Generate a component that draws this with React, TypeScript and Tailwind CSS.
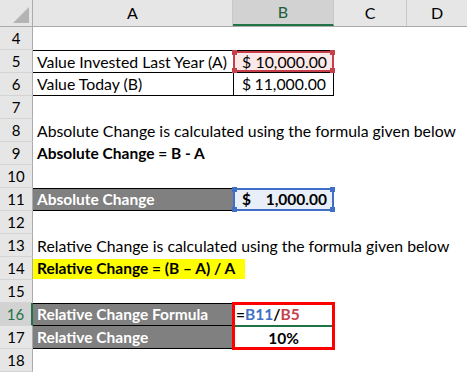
import type { ReactNode } from 'react';

const font = "font-['Lato','Liberation_Sans',sans-serif]";

function RowHead({ n, active }: { n: number; active?: boolean }) {
    return (
        <div
            className={`w-[33px] shrink-0 flex items-center justify-center text-[15px] border-b border-[#d4d4d4] ${
                active
                    ? 'bg-[#d2d2d2] text-[#217346] border-r-2 border-r-[#217346]'
                    : 'bg-[#e6e6e6] text-black border-r border-r-[#ababab]'
            }`}
        >
            {n}
        </div>
    );
}

function Row({ n, active, children }: { n: number; active?: boolean; children?: ReactNode }) {
    return (
        <div className="flex h-[23px]">
            <RowHead n={n} active={active} />
            <div className="flex flex-1 min-w-0">{children}</div>
        </div>
    );
}

function Corner({ pos, color }: { pos: string; color: string }) {
    return <span className={`absolute w-[5px] h-[5px] ${pos} ${color}`} />;
}

// reference highlight boxes drawn by Excel while editing a formula
function RefBox({ color, fill }: { color: 'red' | 'blue'; fill: string }) {
    const border = color === 'red' ? 'border-[#c6404c]' : 'border-[#3f6fc6]';
    const sq = color === 'red' ? 'bg-[#c6404c]' : 'bg-[#3f6fc6]';
    return (
        <div className={`absolute inset-0 border-2 ${border} ${fill}`}>
            <Corner pos="-left-[3px] -top-[3px]" color={sq} />
            <Corner pos="-right-[3px] -top-[3px]" color={sq} />
            <Corner pos="-left-[3px] -bottom-[3px]" color={sq} />
            <Corner pos="-right-[3px] -bottom-[3px]" color={sq} />
        </div>
    );
}

export default function App() {
    return (
        <div className={`w-[467px] h-[374px] overflow-hidden bg-white text-black ${font}`}>
            {/* Column headers */}
            <div className="flex h-[27px] bg-[#e6e6e6] border-b border-[#ababab]">
                <div className="w-[33px] shrink-0 relative border-r border-[#ababab]">
                    <svg className="absolute right-[3px] bottom-[3px]" width="16" height="16" viewBox="0 0 16 16">
                        <polygon points="16,0 16,16 0,16" fill="#b4b4b4" />
                    </svg>
                </div>
                <div className="w-[200px] shrink-0 flex items-center justify-center text-[16px] border-r border-[#c8c8c8]">A</div>
                <div className="w-[101px] shrink-0 flex items-center justify-center text-[16px] bg-[#d2d2d2] text-[#1e5e3a] border-b-2 border-[#217346] border-r border-r-[#c8c8c8]">B</div>
                <div className="w-[73px] shrink-0 flex items-center justify-center text-[16px] border-r border-[#c8c8c8]">C</div>
                <div className="flex-1 flex items-center justify-center text-[16px]">D</div>
            </div>

            <Row n={4} />
            <Row n={5}>
                <div className="w-[200px] shrink-0 border-y border-black flex items-center pl-[4px] text-[15.8px] whitespace-nowrap">
                    Value Invested Last Year (A)
                </div>
                <div className="w-[101px] shrink-0 relative border-y border-black">
                    <RefBox color="red" fill="bg-[#fbe8e8]" />
                    <div className="relative h-full flex items-center justify-between pl-[9px] pr-[7px] text-[15.8px]">
                        <span>$</span>
                        <span>10,000.00</span>
                    </div>
                </div>
            </Row>
            <Row n={6}>
                <div className="w-[200px] shrink-0 border-b border-black flex items-center pl-[4px] text-[15.8px]">Value Today (B)</div>
                <div className="w-[101px] shrink-0 border-x border-b border-black flex items-center justify-between pl-[8px] pr-[7px] text-[15.8px]">
                    <span>$</span>
                    <span>11,000.00</span>
                </div>
            </Row>
            <Row n={7} />
            <Row n={8}>
                <div className="flex items-center pl-[4px] text-[15.8px] whitespace-nowrap">
                    Absolute Change is calculated using the formula given below
                </div>
            </Row>
            <Row n={9}>
                <div className="flex items-center pl-[4px] text-[15.5px] font-bold whitespace-nowrap">Absolute Change = B - A</div>
            </Row>
            <Row n={10} />
            <Row n={11}>
                <div className="w-[200px] shrink-0 bg-[#808080] text-white font-bold border-y border-black flex items-center pl-[4px] text-[15.5px]">
                    Absolute Change
                </div>
                <div className="w-[101px] shrink-0 relative">
                    <RefBox color="blue" fill="bg-[#e9eff9]" />
                    <div className="relative h-full flex items-center justify-between pl-[9px] pr-[7px] text-[15.5px] font-bold">
                        <span>$</span>
                        <span>1,000.00</span>
                    </div>
                </div>
            </Row>
            <Row n={12} />
            <Row n={13}>
                <div className="flex items-center pl-[4px] text-[15.8px] whitespace-nowrap">
                    Relative Change is calculated using the formula given below
                </div>
            </Row>
            <Row n={14}>
                <div className="w-[212px] shrink-0 flex items-center">
                    <div className="h-[20px] w-full bg-[#ffff00] flex items-center pl-[4px] text-[15.5px] font-bold whitespace-nowrap">
                        Relative Change = (B – A) / A
                    </div>
                </div>
            </Row>
            <Row n={15} />

            {/* Rows 16-17 share the red box around B16:B17 */}
            <div className="flex h-[46px]">
                <div className="flex flex-col shrink-0">
                    <div className="flex h-[23px]">
                        <RowHead n={16} active />
                    </div>
                    <div className="flex h-[23px]">
                        <RowHead n={17} />
                    </div>
                </div>
                <div className="w-[200px] shrink-0 flex flex-col bg-[#808080] text-white font-bold text-[15.5px] border-y border-black">
                    <div className="h-[22px] flex items-center pl-[4px] border-b border-black">Relative Change Formula</div>
                    <div className="flex-1 flex items-center pl-[4px]">Relative Change</div>
                </div>
                <div className="w-[103px] -ml-[1px] -my-[1px] h-[48px] shrink-0 flex flex-col border-[3px] border-[#ff0000] font-bold text-[15.5px]">
                    <div className="h-[22px] flex items-center pl-[1px] border-b-2 border-[#217346]">
                        <span>=</span>
                        <span className="text-[#3f6fc6]">B11</span>
                        <span>/</span>
                        <span className="text-[#c6404c]">B5</span>
                    </div>
                    <div className="flex-1 flex items-center justify-center">10%</div>
                </div>
            </div>
            <Row n={18} />
        </div>
    );
}
